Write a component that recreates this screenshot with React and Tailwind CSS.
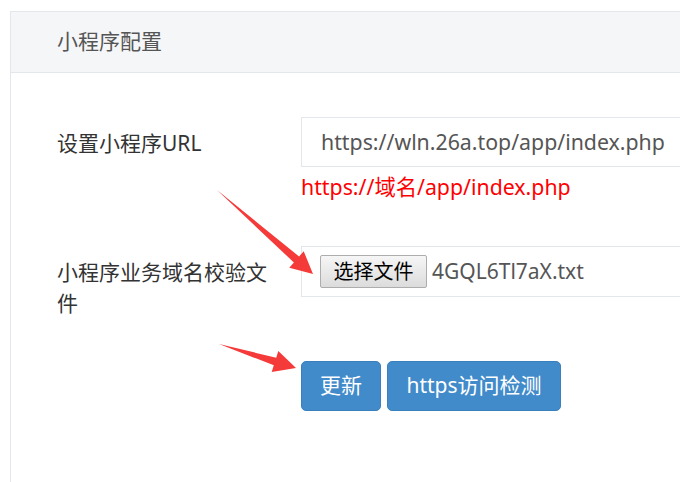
import React from 'react';

const font = { fontFamily: '"Noto Sans", "Noto Sans CJK SC", sans-serif' };

function Arrows() {
  return (
    <svg className="absolute left-0 top-0 pointer-events-none" width="680" height="482">
      <polygon
        fill="#f53a3a"
        points="217,190 299.1,256.5 303.7,251.2 313,274 289.3,267.8 293.9,262.5"
      />
      <polygon
        fill="#f53a3a"
        points="219,344 276.2,357.7 278.3,351 296,368 271.7,372 273.8,365.3"
      />
    </svg>
  );
}

export default function App() {
  return (
    <div
      className="relative w-[680px] h-[482px] overflow-hidden bg-white pt-[11px] pl-[10px] text-[21px]"
      style={font}
    >
      <div className="w-[720px] h-[500px] border-l border-t border-[#e3e6ea]">
        {/* Header */}
        <div className="h-[61px] bg-[#f5f6f8] border-b border-[#e3e6ea] flex items-center pl-[46px] text-[#555]">
          小程序配置
        </div>

        {/* Body */}
        <div className="pt-[44px] pl-[46px]">
          <div className="flex">
            <label className="w-[220px] mr-[24px] pt-[11px] leading-[31px] text-[#333]">
              设置小程序URL
            </label>
            <div className="flex-1">
              <div className="h-[50px] border border-[#e3e6ea] flex items-center pl-[19px] text-[21.3px] text-[#555]">
                https://wln.26a.top/app/index.php
              </div>
              <div className="mt-[6px] leading-[28px] text-[21.3px] text-[#ff0000]">https://域名/app/index.php</div>
            </div>
          </div>

          <div className="flex mt-[45px]">
            <label className="w-[220px] mr-[24px] pt-[11px] leading-[31px] text-[#333]">
              小程序业务域名校验文件
            </label>
            <div className="flex-1">
              <div className="h-[51px] border border-[#e3e6ea] flex items-center pl-[18px] text-[#555]">
                <button className="h-[33px] w-[107px] border border-[#adadad] rounded-[2px] bg-gradient-to-b from-[#f6f6f6] to-[#dcdcdc] text-[20px] text-black leading-none">
                  选择文件
                </button>
                <span className="ml-[5px]">4GQL6Tl7aX.txt</span>
              </div>
            </div>
          </div>

          <div className="flex gap-[6px] mt-[42px] ml-[244px]">
            <button className="h-[50px] w-[80px] rounded-[5px] bg-[#428bca] border border-[#3a80bd] text-white">
              更新
            </button>
            <button className="h-[50px] w-[174px] rounded-[5px] bg-[#428bca] border border-[#3a80bd] text-white">
              https访问检测
            </button>
          </div>
        </div>
      </div>
      <Arrows />
    </div>
  );
}
